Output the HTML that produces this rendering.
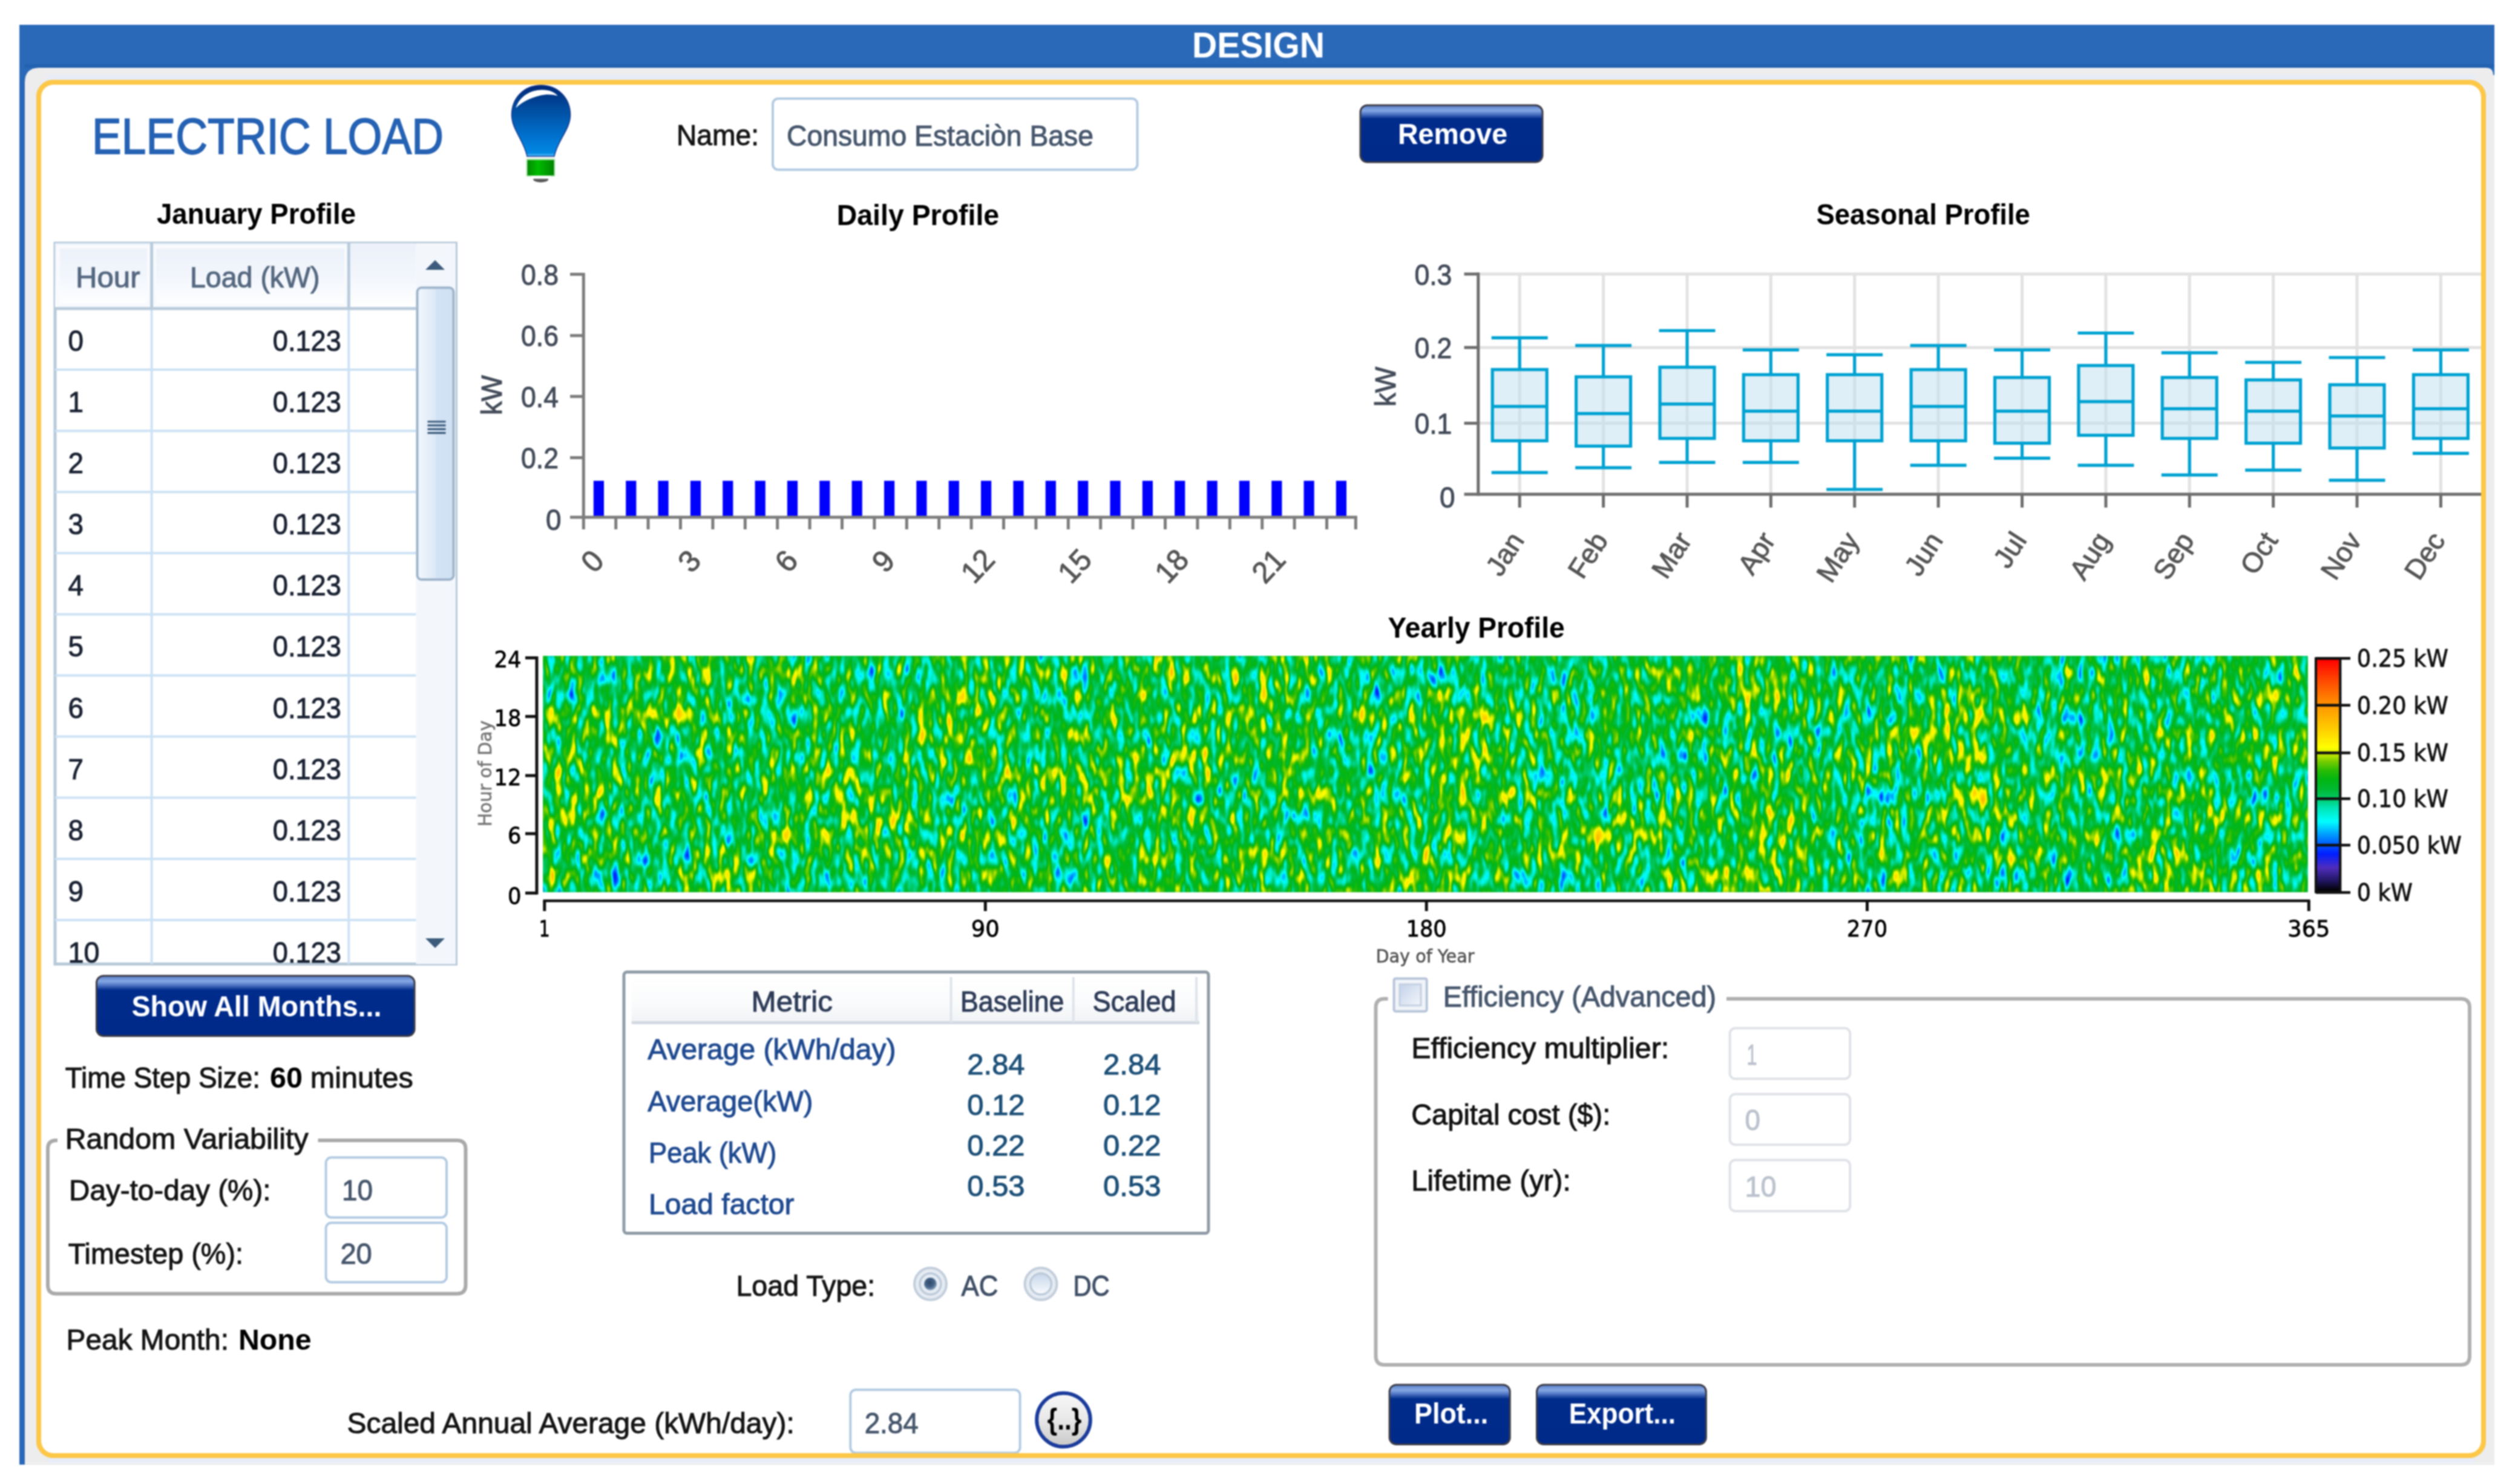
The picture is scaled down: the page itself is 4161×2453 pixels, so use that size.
<!DOCTYPE html>
<html lang="en"><head><meta charset="utf-8"><title>Electric Load - Design</title>
<style>html,body{margin:0;padding:0;background:#fff;overflow:hidden}svg{display:block}text{font-family:"Liberation Sans",sans-serif}</style></head>
<body>
<svg width="4161" height="2453" viewBox="0 0 4161 2453" style="filter:blur(1.3px)">
<defs>
<linearGradient id="btn" x1="0" y1="0" x2="0" y2="1">
<stop offset="0" stop-color="#5f86cf"/><stop offset="0.08" stop-color="#86a8e4"/><stop offset="0.15" stop-color="#4a70c0"/>
<stop offset="0.23" stop-color="#002c8c"/><stop offset="1" stop-color="#002a8a"/>
</linearGradient>
<linearGradient id="bulb" x1="0" y1="0" x2="0" y2="1">
<stop offset="0" stop-color="#002878"/><stop offset="0.3" stop-color="#004a9c"/><stop offset="0.7" stop-color="#0070cc"/><stop offset="0.95" stop-color="#0088e4"/><stop offset="1" stop-color="#58c0ff"/>
</linearGradient>
<linearGradient id="base" x1="0" y1="0" x2="1" y2="0">
<stop offset="0" stop-color="#008a00"/><stop offset="0.4" stop-color="#00bc00"/><stop offset="1" stop-color="#008400"/>
</linearGradient>

<linearGradient id="thdr" x1="0" y1="0" x2="0" y2="1">
<stop offset="0" stop-color="#ecf1fa"/><stop offset="0.5" stop-color="#f2f6fc"/><stop offset="1" stop-color="#ffffff"/>
</linearGradient>
<linearGradient id="thumb" x1="0" y1="0" x2="1" y2="0">
<stop offset="0" stop-color="#f2f7fd"/><stop offset="0.45" stop-color="#dfeaf7"/><stop offset="0.55" stop-color="#d2e3f5"/><stop offset="1" stop-color="#cfe1f4"/>
</linearGradient>
<clipPath id="tclip"><rect x="91" y="402" width="662" height="1191.5"/></clipPath>

<linearGradient id="rbtn" x1="0" y1="0" x2="0" y2="1">
<stop offset="0" stop-color="#f8f8f8"/><stop offset="0.5" stop-color="#e8e8e8"/><stop offset="1" stop-color="#c8c8c8"/>
</linearGradient>

<filter id="hm" x="0" y="0" width="1" height="1" color-interpolation-filters="sRGB">
<feTurbulence type="fractalNoise" baseFrequency="0.085 0.03" numOctaves="2" seed="7" result="t1"/>
<feColorMatrix in="t1" type="matrix" values="1 0 0 0 0  1 0 0 0 0  1 0 0 0 0  0 0 0 0 1" result="a"/>
<feTurbulence type="fractalNoise" baseFrequency="0.006 0.012" numOctaves="1" seed="4" result="t2"/>
<feColorMatrix in="t2" type="matrix" values="1 0 0 0 0  1 0 0 0 0  1 0 0 0 0  0 0 0 0 1" result="b"/>
<feComposite in="a" in2="b" operator="arithmetic" k1="0" k2="1" k3="0.3" k4="-0.15"/>
<feGaussianBlur stdDeviation="1.6 3.2"/>
<feComponentTransfer><feFuncR type="table" tableValues="0.222 0.284 0.261 0.162 0.063 0.000 0.000 0.000 0.000 0.000 0.000 0.000 0.000 0.000 0.000 0.000 0.000 0.000 0.000 0.000 0.000 0.000 0.039 0.114 0.220 0.369 0.529 0.716 0.877 1.000 1.000 1.000 1.000 1.000 1.000 1.000 1.000 1.000 1.000 1.000 1.000"/><feFuncG type="table" tableValues="0.131 0.162 0.167 0.148 0.129 0.159 0.271 0.382 0.494 0.609 0.739 0.870 1.000 0.966 0.933 0.899 0.850 0.798 0.764 0.736 0.722 0.716 0.720 0.731 0.751 0.782 0.826 0.896 0.955 0.993 0.946 0.900 0.853 0.806 0.765 0.724 0.683 0.642 0.601 0.553 0.500"/><feFuncB type="table" tableValues="0.562 0.686 0.788 0.868 0.949 1.000 1.000 1.000 1.000 1.000 1.000 1.000 1.000 0.907 0.814 0.721 0.580 0.431 0.324 0.230 0.161 0.105 0.064 0.036 0.016 0.006 0.000 0.000 0.000 0.000 0.000 0.000 0.000 0.000 0.000 0.000 0.000 0.000 0.000 0.000 0.000"/></feComponentTransfer>
</filter>
<linearGradient id="cbar" x1="0" y1="0" x2="0" y2="1"><stop offset="0.000" stop-color="rgb(255,0,0)"/><stop offset="0.100" stop-color="rgb(255,80,0)"/><stop offset="0.200" stop-color="rgb(255,150,0)"/><stop offset="0.300" stop-color="rgb(255,205,0)"/><stop offset="0.380" stop-color="rgb(255,255,0)"/><stop offset="0.408" stop-color="rgb(200,235,0)"/><stop offset="0.440" stop-color="rgb(120,205,0)"/><stop offset="0.480" stop-color="rgb(40,188,5)"/><stop offset="0.520" stop-color="rgb(0,182,20)"/><stop offset="0.560" stop-color="rgb(0,185,50)"/><stop offset="0.600" stop-color="rgb(0,200,100)"/><stop offset="0.640" stop-color="rgb(0,228,180)"/><stop offset="0.700" stop-color="rgb(0,255,255)"/><stop offset="0.760" stop-color="rgb(0,150,255)"/><stop offset="0.800" stop-color="rgb(0,90,255)"/><stop offset="0.840" stop-color="rgb(0,30,255)"/><stop offset="0.900" stop-color="rgb(80,45,190)"/><stop offset="0.960" stop-color="rgb(30,20,90)"/><stop offset="1.000" stop-color="rgb(0,0,0)"/></linearGradient>

<linearGradient id="mhdr" x1="0" y1="0" x2="0" y2="1">
<stop offset="0" stop-color="#ffffff"/><stop offset="0.6" stop-color="#fafbfc"/><stop offset="1" stop-color="#f1f3f6"/>
</linearGradient>
<radialGradient id="radio" cx="0.5" cy="0.5" r="0.5">
<stop offset="0" stop-color="#f4f7fb"/><stop offset="0.6" stop-color="#eef2f8"/><stop offset="1" stop-color="#dfe6ef"/>
</radialGradient>
<linearGradient id="radio2" x1="0" y1="0" x2="0" y2="1">
<stop offset="0" stop-color="#c5d6ea"/><stop offset="1" stop-color="#fbfcfe"/>
</linearGradient>
<radialGradient id="dot" cx="0.45" cy="0.4" r="0.6">
<stop offset="0" stop-color="#2d4868"/><stop offset="0.6" stop-color="#46648a"/><stop offset="1" stop-color="#8fa6c0"/>
</radialGradient>
<linearGradient id="chk" x1="0" y1="0" x2="1" y2="1">
<stop offset="0" stop-color="#c3d2ea"/><stop offset="1" stop-color="#f3f6fb"/>
</linearGradient>
</defs>
<rect x="32.0" y="41.0" width="4090.0" height="99.0" fill="#2a69b8"/>
<rect x="32.0" y="41.0" width="9.0" height="2380.0" fill="#2a69b8"/>
<rect x="41.0" y="106.0" width="4081.0" height="6.0" fill="#2262b0"/>
<path d="M41 2418 V136 Q41 112 65 112 H4108 Q4120 112 4120 124 V2418 Z" fill="#ededed"/>
<line x1="41.0" y1="2420.0" x2="4121.0" y2="2420.0" stroke="#e4e4e4" stroke-width="2" />
<line x1="4121.0" y1="124.0" x2="4121.0" y2="2421.0" stroke="#ececec" stroke-width="2" />
<rect x="59.0" y="131.0" width="4050.0" height="2280.0" fill="#e7ecf6" rx="28"/>
<rect x="78.0" y="123.0" width="4012.0" height="10.0" fill="#e7ecf6"/>
<rect x="78.0" y="2409.0" width="4012.0" height="9.0" fill="#e7ecf6"/>
<rect x="64.0" y="136.0" width="4040.0" height="2270.0" fill="#fff" stroke="#fdc748" stroke-width="8" rx="24"/>
<text x="2079.5" y="95.3" font-size="60" textLength="219.0" lengthAdjust="spacingAndGlyphs" font-weight="bold" fill="#fff" text-anchor="middle">DESIGN</text>
<text x="152.0" y="254.2" font-size="84" textLength="581.0" lengthAdjust="spacingAndGlyphs" fill="#2662b4" stroke="#2662b4" stroke-width="1.75">ELECTRIC LOAD</text>
<g>
<path d="M894 141 C866 141 845.5 162 845.5 190 C845.5 214 866 232 871 258.5 H916 C921 232 942.5 214 942.5 190 C942.5 162 922 141 894 141 Z" fill="url(#bulb)" stroke="#16368a" stroke-width="1.5"/>
<path d="M852.5 178.5 C858 160 876 148.5 896 148.5 C908 148.5 917 152.5 921.5 158.5 C912 155.5 902 155.5 892 158 C875 162 861 170 852.5 178.5 Z" fill="#fff"/>
<rect x="869.5" y="262.0" width="48.0" height="30.0" fill="#b4e6b4" rx="2"/>
<rect x="871.5" y="264.5" width="44.0" height="25.5" fill="url(#base)"/>
<ellipse cx="893.7" cy="296.5" rx="12.5" ry="5" fill="#5a5a5a"/>
<rect x="878.0" y="291.0" width="32.0" height="4.5" fill="#fff"/>
</g>
<text x="1118.0" y="240.0" font-size="48" textLength="136.0" lengthAdjust="spacingAndGlyphs" fill="#141414" stroke="#141414" stroke-width="1.00">Name:</text>
<rect x="1277.0" y="163.0" width="602.5" height="117.5" fill="#fff" stroke="#b3cbe3" stroke-width="4" rx="9"/>
<text x="1300.0" y="241.0" font-size="48" textLength="507.0" lengthAdjust="spacingAndGlyphs" fill="#46566c" stroke="#46566c" stroke-width="1.00">Consumo Estaciòn Base</text>
<rect x="2246.5" y="172.5" width="304.0" height="97.0" fill="#3c3c48" rx="13"/>
<rect x="2249.5" y="175.5" width="298.0" height="91.0" fill="url(#btn)" rx="10"/>
<text x="2310.0" y="237.6" font-size="48" textLength="181.0" lengthAdjust="spacingAndGlyphs" font-weight="bold" fill="#fff">Remove</text>
<text x="259.0" y="370.0" font-size="48" textLength="329.0" lengthAdjust="spacingAndGlyphs" font-weight="bold">January Profile</text>
<text x="1382.7" y="371.6" font-size="48" textLength="268.5" lengthAdjust="spacingAndGlyphs" font-weight="bold">Daily Profile</text>
<text x="3001.4" y="370.8" font-size="48" textLength="353.5" lengthAdjust="spacingAndGlyphs" font-weight="bold">Seasonal Profile</text>
<text x="2293.6" y="1054.0" font-size="48" textLength="292.0" lengthAdjust="spacingAndGlyphs" font-weight="bold">Yearly Profile</text>
<rect x="91.0" y="402.0" width="662.5" height="1191.5" fill="#fff" stroke="#b7c9d9" stroke-width="5"/>
<g clip-path="url(#tclip)">
<rect x="91.0" y="402.0" width="596.5" height="106.0" fill="url(#thdr)"/>
<rect x="96.0" y="408.0" width="150.0" height="96.0" fill="none" stroke="#f8fafd" stroke-width="6"/>
<rect x="255.0" y="408.0" width="317.0" height="96.0" fill="none" stroke="#f8fafd" stroke-width="6"/>
<rect x="687.5" y="402.0" width="66.0" height="1192.0" fill="#f3f7fc"/>
<line x1="250.6" y1="510.0" x2="250.6" y2="1596.0" stroke="#cde2f5" stroke-width="4" />
<line x1="250.6" y1="402.0" x2="250.6" y2="510.0" stroke="#b9cbdc" stroke-width="5" />
<line x1="576.3" y1="510.0" x2="576.3" y2="1596.0" stroke="#cde2f5" stroke-width="4" />
<line x1="576.3" y1="402.0" x2="576.3" y2="510.0" stroke="#b9cbdc" stroke-width="5" />
<line x1="91.0" y1="611.1" x2="687.5" y2="611.1" stroke="#cde2f5" stroke-width="4" />
<line x1="91.0" y1="712.2" x2="687.5" y2="712.2" stroke="#cde2f5" stroke-width="4" />
<line x1="91.0" y1="813.2" x2="687.5" y2="813.2" stroke="#cde2f5" stroke-width="4" />
<line x1="91.0" y1="914.3" x2="687.5" y2="914.3" stroke="#cde2f5" stroke-width="4" />
<line x1="91.0" y1="1015.4" x2="687.5" y2="1015.4" stroke="#cde2f5" stroke-width="4" />
<line x1="91.0" y1="1116.5" x2="687.5" y2="1116.5" stroke="#cde2f5" stroke-width="4" />
<line x1="91.0" y1="1217.6" x2="687.5" y2="1217.6" stroke="#cde2f5" stroke-width="4" />
<line x1="91.0" y1="1318.6" x2="687.5" y2="1318.6" stroke="#cde2f5" stroke-width="4" />
<line x1="91.0" y1="1419.7" x2="687.5" y2="1419.7" stroke="#cde2f5" stroke-width="4" />
<line x1="91.0" y1="1520.8" x2="687.5" y2="1520.8" stroke="#cde2f5" stroke-width="4" />
<line x1="91.0" y1="510.0" x2="687.5" y2="510.0" stroke="#b9cbdc" stroke-width="5" />
<text x="125.0" y="474.7" font-size="48" textLength="106.5" lengthAdjust="spacingAndGlyphs" fill="#556880" stroke="#556880" stroke-width="1.00">Hour</text>
<text x="314.0" y="474.7" font-size="48" textLength="214.5" lengthAdjust="spacingAndGlyphs" fill="#556880" stroke="#556880" stroke-width="1.00">Load (kW)</text>
<text x="112.4" y="580.0" font-size="48" textLength="25.5" lengthAdjust="spacingAndGlyphs" fill="#1a2232" stroke="#1a2232" stroke-width="1.00">0</text>
<text x="450.8" y="580.0" font-size="48" textLength="113.0" lengthAdjust="spacingAndGlyphs" fill="#1a2232" stroke="#1a2232" stroke-width="1.00">0.123</text>
<text x="112.4" y="681.1" font-size="48" textLength="25.5" lengthAdjust="spacingAndGlyphs" fill="#1a2232" stroke="#1a2232" stroke-width="1.00">1</text>
<text x="450.8" y="681.1" font-size="48" textLength="113.0" lengthAdjust="spacingAndGlyphs" fill="#1a2232" stroke="#1a2232" stroke-width="1.00">0.123</text>
<text x="112.4" y="782.2" font-size="48" textLength="25.5" lengthAdjust="spacingAndGlyphs" fill="#1a2232" stroke="#1a2232" stroke-width="1.00">2</text>
<text x="450.8" y="782.2" font-size="48" textLength="113.0" lengthAdjust="spacingAndGlyphs" fill="#1a2232" stroke="#1a2232" stroke-width="1.00">0.123</text>
<text x="112.4" y="883.2" font-size="48" textLength="25.5" lengthAdjust="spacingAndGlyphs" fill="#1a2232" stroke="#1a2232" stroke-width="1.00">3</text>
<text x="450.8" y="883.2" font-size="48" textLength="113.0" lengthAdjust="spacingAndGlyphs" fill="#1a2232" stroke="#1a2232" stroke-width="1.00">0.123</text>
<text x="112.4" y="984.3" font-size="48" textLength="25.5" lengthAdjust="spacingAndGlyphs" fill="#1a2232" stroke="#1a2232" stroke-width="1.00">4</text>
<text x="450.8" y="984.3" font-size="48" textLength="113.0" lengthAdjust="spacingAndGlyphs" fill="#1a2232" stroke="#1a2232" stroke-width="1.00">0.123</text>
<text x="112.4" y="1085.4" font-size="48" textLength="25.5" lengthAdjust="spacingAndGlyphs" fill="#1a2232" stroke="#1a2232" stroke-width="1.00">5</text>
<text x="450.8" y="1085.4" font-size="48" textLength="113.0" lengthAdjust="spacingAndGlyphs" fill="#1a2232" stroke="#1a2232" stroke-width="1.00">0.123</text>
<text x="112.4" y="1186.5" font-size="48" textLength="25.5" lengthAdjust="spacingAndGlyphs" fill="#1a2232" stroke="#1a2232" stroke-width="1.00">6</text>
<text x="450.8" y="1186.5" font-size="48" textLength="113.0" lengthAdjust="spacingAndGlyphs" fill="#1a2232" stroke="#1a2232" stroke-width="1.00">0.123</text>
<text x="112.4" y="1287.6" font-size="48" textLength="25.5" lengthAdjust="spacingAndGlyphs" fill="#1a2232" stroke="#1a2232" stroke-width="1.00">7</text>
<text x="450.8" y="1287.6" font-size="48" textLength="113.0" lengthAdjust="spacingAndGlyphs" fill="#1a2232" stroke="#1a2232" stroke-width="1.00">0.123</text>
<text x="112.4" y="1388.6" font-size="48" textLength="25.5" lengthAdjust="spacingAndGlyphs" fill="#1a2232" stroke="#1a2232" stroke-width="1.00">8</text>
<text x="450.8" y="1388.6" font-size="48" textLength="113.0" lengthAdjust="spacingAndGlyphs" fill="#1a2232" stroke="#1a2232" stroke-width="1.00">0.123</text>
<text x="112.4" y="1489.7" font-size="48" textLength="25.5" lengthAdjust="spacingAndGlyphs" fill="#1a2232" stroke="#1a2232" stroke-width="1.00">9</text>
<text x="450.8" y="1489.7" font-size="48" textLength="113.0" lengthAdjust="spacingAndGlyphs" fill="#1a2232" stroke="#1a2232" stroke-width="1.00">0.123</text>
<text x="112.4" y="1590.8" font-size="48" textLength="52.0" lengthAdjust="spacingAndGlyphs" fill="#1a2232" stroke="#1a2232" stroke-width="1.00">10</text>
<text x="450.8" y="1590.8" font-size="48" textLength="113.0" lengthAdjust="spacingAndGlyphs" fill="#1a2232" stroke="#1a2232" stroke-width="1.00">0.123</text>
<path d="M703 446 L719 430 L735 446 Z" fill="#3d5c7c"/>
<path d="M703 1551 L719 1567 L735 1551 Z" fill="#3d5c7c"/>
<rect x="689.5" y="475.5" width="60.0" height="482.5" fill="url(#thumb)" stroke="#9fb4cb" stroke-width="4" rx="7"/>
<line x1="706.5" y1="697.0" x2="736.5" y2="697.0" stroke="#3d5c7c" stroke-width="3.2" />
<line x1="706.5" y1="703.2" x2="736.5" y2="703.2" stroke="#3d5c7c" stroke-width="3.2" />
<line x1="706.5" y1="709.4" x2="736.5" y2="709.4" stroke="#3d5c7c" stroke-width="3.2" />
<line x1="706.5" y1="715.6" x2="736.5" y2="715.6" stroke="#3d5c7c" stroke-width="3.2" />
</g>
<rect x="158.0" y="1611.5" width="528.5" height="102.5" fill="#3c3c48" rx="13"/>
<rect x="161.0" y="1614.5" width="522.5" height="96.5" fill="url(#btn)" rx="10"/>
<text x="217.5" y="1680.2" font-size="48" textLength="413.0" lengthAdjust="spacingAndGlyphs" font-weight="bold" fill="#fff">Show All Months...</text>
<text x="107.7" y="1797.8" font-size="48" textLength="322.3" lengthAdjust="spacingAndGlyphs" fill="#141414" stroke="#141414" stroke-width="1.00">Time Step Size:</text>
<text x="446.0" y="1797.8" font-size="48" textLength="54.0" lengthAdjust="spacingAndGlyphs" font-weight="bold">60</text>
<text x="512.7" y="1797.8" font-size="48" textLength="170.0" lengthAdjust="spacingAndGlyphs" fill="#141414" stroke="#141414" stroke-width="1.00">minutes</text>
<path d="M95 1885 H93 Q79 1885 79 1899 V2124 Q79 2138.5 93 2138.5 H755 Q769.5 2138.5 769.5 2124 V1899 Q769.5 1885 755 1885 H525.5" fill="none" stroke="#aaaaaa" stroke-width="6"/>
<text x="107.7" y="1898.5" font-size="48" textLength="402.0" lengthAdjust="spacingAndGlyphs" fill="#141414" stroke="#141414" stroke-width="1.00">Random Variability</text>
<text x="114.0" y="1983.6" font-size="48" textLength="333.6" lengthAdjust="spacingAndGlyphs" fill="#141414" stroke="#141414" stroke-width="1.00">Day-to-day (%):</text>
<text x="112.8" y="2089.2" font-size="48" textLength="289.2" lengthAdjust="spacingAndGlyphs" fill="#141414" stroke="#141414" stroke-width="1.00">Timestep (%):</text>
<rect x="538.6" y="1913.2" width="199.4" height="99.3" fill="#fff" stroke="#b3cbe3" stroke-width="4" rx="9"/>
<rect x="538.6" y="2021.2" width="199.4" height="98.3" fill="#fff" stroke="#b3cbe3" stroke-width="4" rx="9"/>
<text x="565.0" y="1983.6" font-size="48" textLength="51.0" lengthAdjust="spacingAndGlyphs" fill="#46566c" stroke="#46566c" stroke-width="1.00">10</text>
<text x="562.4" y="2089.2" font-size="48" textLength="52.4" lengthAdjust="spacingAndGlyphs" fill="#46566c" stroke="#46566c" stroke-width="1.00">20</text>
<text x="109.6" y="2230.6" font-size="48" textLength="268.4" lengthAdjust="spacingAndGlyphs" fill="#141414" stroke="#141414" stroke-width="1.00">Peak Month:</text>
<text x="394.0" y="2230.6" font-size="48" textLength="120.7" lengthAdjust="spacingAndGlyphs" font-weight="bold">None</text>
<text x="573.5" y="2369.0" font-size="48" textLength="739.2" lengthAdjust="spacingAndGlyphs" fill="#141414" stroke="#141414" stroke-width="1.00">Scaled Annual Average (kWh/day):</text>
<rect x="1405.3" y="2297.3" width="280.3" height="104.2" fill="#fff" stroke="#b3cbe3" stroke-width="4" rx="9"/>
<text x="1428.7" y="2368.7" font-size="48" textLength="89.0" lengthAdjust="spacingAndGlyphs" fill="#46566c" stroke="#46566c" stroke-width="1.00">2.84</text>
<circle cx="1757.5" cy="2347" r="44.3" fill="url(#rbtn)" stroke="#1b3c9c" stroke-width="6"/>
<text x="1759.0" y="2363.0" font-size="50" textLength="57.0" lengthAdjust="spacingAndGlyphs" font-weight="bold" text-anchor="middle">{..}</text>
<rect x="980.8" y="794.7" width="17.2" height="60.3" fill="#0000ff"/>
<rect x="1034.2" y="794.7" width="17.2" height="60.3" fill="#0000ff"/>
<rect x="1087.5" y="794.7" width="17.2" height="60.3" fill="#0000ff"/>
<rect x="1140.9" y="794.7" width="17.2" height="60.3" fill="#0000ff"/>
<rect x="1194.2" y="794.7" width="17.2" height="60.3" fill="#0000ff"/>
<rect x="1247.6" y="794.7" width="17.2" height="60.3" fill="#0000ff"/>
<rect x="1300.9" y="794.7" width="17.2" height="60.3" fill="#0000ff"/>
<rect x="1354.2" y="794.7" width="17.2" height="60.3" fill="#0000ff"/>
<rect x="1407.6" y="794.7" width="17.2" height="60.3" fill="#0000ff"/>
<rect x="1461.0" y="794.7" width="17.2" height="60.3" fill="#0000ff"/>
<rect x="1514.3" y="794.7" width="17.2" height="60.3" fill="#0000ff"/>
<rect x="1567.7" y="794.7" width="17.2" height="60.3" fill="#0000ff"/>
<rect x="1621.0" y="794.7" width="17.2" height="60.3" fill="#0000ff"/>
<rect x="1674.4" y="794.7" width="17.2" height="60.3" fill="#0000ff"/>
<rect x="1727.7" y="794.7" width="17.2" height="60.3" fill="#0000ff"/>
<rect x="1781.1" y="794.7" width="17.2" height="60.3" fill="#0000ff"/>
<rect x="1834.4" y="794.7" width="17.2" height="60.3" fill="#0000ff"/>
<rect x="1887.8" y="794.7" width="17.2" height="60.3" fill="#0000ff"/>
<rect x="1941.1" y="794.7" width="17.2" height="60.3" fill="#0000ff"/>
<rect x="1994.5" y="794.7" width="17.2" height="60.3" fill="#0000ff"/>
<rect x="2047.8" y="794.7" width="17.2" height="60.3" fill="#0000ff"/>
<rect x="2101.2" y="794.7" width="17.2" height="60.3" fill="#0000ff"/>
<rect x="2154.5" y="794.7" width="17.2" height="60.3" fill="#0000ff"/>
<rect x="2207.8" y="794.7" width="17.2" height="60.3" fill="#0000ff"/>
<line x1="964.3" y1="451.0" x2="964.3" y2="875.0" stroke="#7d7d7d" stroke-width="5" />
<line x1="942.0" y1="855.0" x2="2242.8" y2="855.0" stroke="#7d7d7d" stroke-width="5" />
<line x1="942.0" y1="453.4" x2="964.3" y2="453.4" stroke="#7d7d7d" stroke-width="5" />
<line x1="942.0" y1="554.7" x2="964.3" y2="554.7" stroke="#7d7d7d" stroke-width="5" />
<line x1="942.0" y1="655.3" x2="964.3" y2="655.3" stroke="#7d7d7d" stroke-width="5" />
<line x1="942.0" y1="756.5" x2="964.3" y2="756.5" stroke="#7d7d7d" stroke-width="5" />
<line x1="1017.7" y1="855.0" x2="1017.7" y2="875.0" stroke="#7d7d7d" stroke-width="5" />
<line x1="1071.1" y1="855.0" x2="1071.1" y2="875.0" stroke="#7d7d7d" stroke-width="5" />
<line x1="1124.5" y1="855.0" x2="1124.5" y2="875.0" stroke="#7d7d7d" stroke-width="5" />
<line x1="1177.9" y1="855.0" x2="1177.9" y2="875.0" stroke="#7d7d7d" stroke-width="5" />
<line x1="1231.3" y1="855.0" x2="1231.3" y2="875.0" stroke="#7d7d7d" stroke-width="5" />
<line x1="1284.7" y1="855.0" x2="1284.7" y2="875.0" stroke="#7d7d7d" stroke-width="5" />
<line x1="1338.1" y1="855.0" x2="1338.1" y2="875.0" stroke="#7d7d7d" stroke-width="5" />
<line x1="1391.5" y1="855.0" x2="1391.5" y2="875.0" stroke="#7d7d7d" stroke-width="5" />
<line x1="1444.9" y1="855.0" x2="1444.9" y2="875.0" stroke="#7d7d7d" stroke-width="5" />
<line x1="1498.3" y1="855.0" x2="1498.3" y2="875.0" stroke="#7d7d7d" stroke-width="5" />
<line x1="1551.7" y1="855.0" x2="1551.7" y2="875.0" stroke="#7d7d7d" stroke-width="5" />
<line x1="1605.1" y1="855.0" x2="1605.1" y2="875.0" stroke="#7d7d7d" stroke-width="5" />
<line x1="1658.5" y1="855.0" x2="1658.5" y2="875.0" stroke="#7d7d7d" stroke-width="5" />
<line x1="1711.9" y1="855.0" x2="1711.9" y2="875.0" stroke="#7d7d7d" stroke-width="5" />
<line x1="1765.3" y1="855.0" x2="1765.3" y2="875.0" stroke="#7d7d7d" stroke-width="5" />
<line x1="1818.7" y1="855.0" x2="1818.7" y2="875.0" stroke="#7d7d7d" stroke-width="5" />
<line x1="1872.1" y1="855.0" x2="1872.1" y2="875.0" stroke="#7d7d7d" stroke-width="5" />
<line x1="1925.5" y1="855.0" x2="1925.5" y2="875.0" stroke="#7d7d7d" stroke-width="5" />
<line x1="1978.9" y1="855.0" x2="1978.9" y2="875.0" stroke="#7d7d7d" stroke-width="5" />
<line x1="2032.3" y1="855.0" x2="2032.3" y2="875.0" stroke="#7d7d7d" stroke-width="5" />
<line x1="2085.7" y1="855.0" x2="2085.7" y2="875.0" stroke="#7d7d7d" stroke-width="5" />
<line x1="2139.1" y1="855.0" x2="2139.1" y2="875.0" stroke="#7d7d7d" stroke-width="5" />
<line x1="2192.5" y1="855.0" x2="2192.5" y2="875.0" stroke="#7d7d7d" stroke-width="5" />
<line x1="2240.3" y1="855.0" x2="2240.3" y2="875.0" stroke="#7d7d7d" stroke-width="5" />
<text x="861.0" y="470.9" font-size="48" textLength="62.0" lengthAdjust="spacingAndGlyphs" fill="#444c5a" stroke="#444c5a" stroke-width="1.00">0.8</text>
<text x="861.0" y="572.2" font-size="48" textLength="62.0" lengthAdjust="spacingAndGlyphs" fill="#444c5a" stroke="#444c5a" stroke-width="1.00">0.6</text>
<text x="861.0" y="672.8" font-size="48" textLength="62.0" lengthAdjust="spacingAndGlyphs" fill="#444c5a" stroke="#444c5a" stroke-width="1.00">0.4</text>
<text x="861.0" y="774.0" font-size="48" textLength="62.0" lengthAdjust="spacingAndGlyphs" fill="#444c5a" stroke="#444c5a" stroke-width="1.00">0.2</text>
<text x="902.0" y="875.5" font-size="48" textLength="25.5" lengthAdjust="spacingAndGlyphs" fill="#444c5a" stroke="#444c5a" stroke-width="1.00">0</text>
<g transform="translate(829,686) rotate(-90)">
<text x="0.0" y="0.0" font-size="48" textLength="66.0" lengthAdjust="spacingAndGlyphs" fill="#444c5a" stroke="#444c5a" stroke-width="1.00">kW</text>
</g>
<g transform="translate(978.3,927.0) rotate(-47)">
<text x="0.0" y="18.0" font-size="50" textLength="27.5" lengthAdjust="spacingAndGlyphs" fill="#555" stroke="#555" stroke-width="1.04" text-anchor="middle">0</text>
</g>
<g transform="translate(1138.5,927.0) rotate(-47)">
<text x="0.0" y="18.0" font-size="50" textLength="27.5" lengthAdjust="spacingAndGlyphs" fill="#555" stroke="#555" stroke-width="1.04" text-anchor="middle">3</text>
</g>
<g transform="translate(1298.7,927.0) rotate(-47)">
<text x="0.0" y="18.0" font-size="50" textLength="27.5" lengthAdjust="spacingAndGlyphs" fill="#555" stroke="#555" stroke-width="1.04" text-anchor="middle">6</text>
</g>
<g transform="translate(1458.9,927.0) rotate(-47)">
<text x="0.0" y="18.0" font-size="50" textLength="27.5" lengthAdjust="spacingAndGlyphs" fill="#555" stroke="#555" stroke-width="1.04" text-anchor="middle">9</text>
</g>
<g transform="translate(1615.1,935.0) rotate(-47)">
<text x="0.0" y="18.0" font-size="50" textLength="54.0" lengthAdjust="spacingAndGlyphs" fill="#555" stroke="#555" stroke-width="1.04" text-anchor="middle">12</text>
</g>
<g transform="translate(1775.3,935.0) rotate(-47)">
<text x="0.0" y="18.0" font-size="50" textLength="54.0" lengthAdjust="spacingAndGlyphs" fill="#555" stroke="#555" stroke-width="1.04" text-anchor="middle">15</text>
</g>
<g transform="translate(1935.5,935.0) rotate(-47)">
<text x="0.0" y="18.0" font-size="50" textLength="54.0" lengthAdjust="spacingAndGlyphs" fill="#555" stroke="#555" stroke-width="1.04" text-anchor="middle">18</text>
</g>
<g transform="translate(2095.7,935.0) rotate(-47)">
<text x="0.0" y="18.0" font-size="50" textLength="54.0" lengthAdjust="spacingAndGlyphs" fill="#555" stroke="#555" stroke-width="1.04" text-anchor="middle">21</text>
</g>
<line x1="2442.8" y1="453.0" x2="4100.0" y2="453.0" stroke="#e2e2e2" stroke-width="5" />
<line x1="2442.8" y1="574.4" x2="4100.0" y2="574.4" stroke="#e2e2e2" stroke-width="5" />
<line x1="2442.8" y1="699.6" x2="4100.0" y2="699.6" stroke="#e2e2e2" stroke-width="5" />
<line x1="2511.2" y1="453.0" x2="2511.2" y2="817.0" stroke="#e2e2e2" stroke-width="5" />
<line x1="2649.6" y1="453.0" x2="2649.6" y2="817.0" stroke="#e2e2e2" stroke-width="5" />
<line x1="2788.0" y1="453.0" x2="2788.0" y2="817.0" stroke="#e2e2e2" stroke-width="5" />
<line x1="2926.3" y1="453.0" x2="2926.3" y2="817.0" stroke="#e2e2e2" stroke-width="5" />
<line x1="3064.7" y1="453.0" x2="3064.7" y2="817.0" stroke="#e2e2e2" stroke-width="5" />
<line x1="3203.1" y1="453.0" x2="3203.1" y2="817.0" stroke="#e2e2e2" stroke-width="5" />
<line x1="3341.5" y1="453.0" x2="3341.5" y2="817.0" stroke="#e2e2e2" stroke-width="5" />
<line x1="3479.9" y1="453.0" x2="3479.9" y2="817.0" stroke="#e2e2e2" stroke-width="5" />
<line x1="3618.2" y1="453.0" x2="3618.2" y2="817.0" stroke="#e2e2e2" stroke-width="5" />
<line x1="3756.6" y1="453.0" x2="3756.6" y2="817.0" stroke="#e2e2e2" stroke-width="5" />
<line x1="3895.0" y1="453.0" x2="3895.0" y2="817.0" stroke="#e2e2e2" stroke-width="5" />
<line x1="4033.4" y1="453.0" x2="4033.4" y2="817.0" stroke="#e2e2e2" stroke-width="5" />
<g stroke="#00a2d2" stroke-width="5.2" fill="none">
<rect x="2466.2" y="610.9" width="90.0" height="117.7" fill="#bfe0f2" fill-opacity="0.5"/>
<path d="M2464.7 558.4 H2557.7 M2511.2 558.4 V610.9 M2466.2 671.8 H2556.2 M2511.2 728.6 V781.1 M2464.7 781.1 H2557.7"/>
</g>
<g stroke="#00a2d2" stroke-width="5.2" fill="none">
<rect x="2604.6" y="622.9" width="90.0" height="114.5" fill="#bfe0f2" fill-opacity="0.5"/>
<path d="M2603.1 571.2 H2696.1 M2649.6 571.2 V622.9 M2604.6 683.7 H2694.6 M2649.6 737.4 V773.2 M2603.1 773.2 H2696.1"/>
</g>
<g stroke="#00a2d2" stroke-width="5.2" fill="none">
<rect x="2743.0" y="607.0" width="90.0" height="117.7" fill="#bfe0f2" fill-opacity="0.5"/>
<path d="M2741.5 546.5 H2834.5 M2788.0 546.5 V607.0 M2743.0 667.8 H2833.0 M2788.0 724.7 V764.4 M2741.5 764.4 H2834.5"/>
</g>
<g stroke="#00a2d2" stroke-width="5.2" fill="none">
<rect x="2881.3" y="619.3" width="90.0" height="109.3" fill="#bfe0f2" fill-opacity="0.5"/>
<path d="M2879.8 578.3 H2972.8 M2926.3 578.3 V619.3 M2881.3 679.7 H2971.3 M2926.3 728.6 V764.4 M2879.8 764.4 H2972.8"/>
</g>
<g stroke="#00a2d2" stroke-width="5.2" fill="none">
<rect x="3019.7" y="619.3" width="90.0" height="109.3" fill="#bfe0f2" fill-opacity="0.5"/>
<path d="M3018.2 586.3 H3111.2 M3064.7 586.3 V619.3 M3019.7 679.7 H3109.7 M3064.7 728.6 V809.0 M3018.2 809.0 H3111.2"/>
</g>
<g stroke="#00a2d2" stroke-width="5.2" fill="none">
<rect x="3158.1" y="611.0" width="90.0" height="117.6" fill="#bfe0f2" fill-opacity="0.5"/>
<path d="M3156.6 571.2 H3249.6 M3203.1 571.2 V611.0 M3158.1 671.8 H3248.1 M3203.1 728.6 V769.2 M3156.6 769.2 H3249.6"/>
</g>
<g stroke="#00a2d2" stroke-width="5.2" fill="none">
<rect x="3296.5" y="624.0" width="90.0" height="108.6" fill="#bfe0f2" fill-opacity="0.5"/>
<path d="M3295.0 578.3 H3388.0 M3341.5 578.3 V624.0 M3296.5 679.7 H3386.5 M3341.5 732.6 V757.3 M3295.0 757.3 H3388.0"/>
</g>
<g stroke="#00a2d2" stroke-width="5.2" fill="none">
<rect x="3434.9" y="604.2" width="90.0" height="115.3" fill="#bfe0f2" fill-opacity="0.5"/>
<path d="M3433.4 550.5 H3526.4 M3479.9 550.5 V604.2 M3434.9 663.8 H3524.9 M3479.9 719.5 V769.2 M3433.4 769.2 H3526.4"/>
</g>
<g stroke="#00a2d2" stroke-width="5.2" fill="none">
<rect x="3573.2" y="624.0" width="90.0" height="100.7" fill="#bfe0f2" fill-opacity="0.5"/>
<path d="M3571.7 583.1 H3664.7 M3618.2 583.1 V624.0 M3573.2 675.7 H3663.2 M3618.2 724.7 V785.1 M3571.7 785.1 H3664.7"/>
</g>
<g stroke="#00a2d2" stroke-width="5.2" fill="none">
<rect x="3711.6" y="628.0" width="90.0" height="104.6" fill="#bfe0f2" fill-opacity="0.5"/>
<path d="M3710.1 599.0 H3803.1 M3756.6 599.0 V628.0 M3711.6 679.7 H3801.6 M3756.6 732.6 V777.1 M3710.1 777.1 H3803.1"/>
</g>
<g stroke="#00a2d2" stroke-width="5.2" fill="none">
<rect x="3850.0" y="636.0" width="90.0" height="104.6" fill="#bfe0f2" fill-opacity="0.5"/>
<path d="M3848.5 591.0 H3941.5 M3895.0 591.0 V636.0 M3850.0 687.7 H3940.0 M3895.0 740.6 V793.8 M3848.5 793.8 H3941.5"/>
</g>
<g stroke="#00a2d2" stroke-width="5.2" fill="none">
<rect x="3988.4" y="619.3" width="90.0" height="105.4" fill="#bfe0f2" fill-opacity="0.5"/>
<path d="M3986.9 578.3 H4079.9 M4033.4 578.3 V619.3 M3988.4 675.7 H4078.4 M4033.4 724.7 V749.3 M3986.9 749.3 H4079.9"/>
</g>
<line x1="2442.8" y1="450.5" x2="2442.8" y2="819.5" stroke="#6e6e6e" stroke-width="5" />
<line x1="2419.5" y1="817.0" x2="4100.0" y2="817.0" stroke="#6e6e6e" stroke-width="5" />
<line x1="2419.5" y1="453.0" x2="2442.8" y2="453.0" stroke="#6e6e6e" stroke-width="5" />
<line x1="2419.5" y1="574.4" x2="2442.8" y2="574.4" stroke="#6e6e6e" stroke-width="5" />
<line x1="2419.5" y1="699.6" x2="2442.8" y2="699.6" stroke="#6e6e6e" stroke-width="5" />
<line x1="2511.2" y1="817.0" x2="2511.2" y2="839.0" stroke="#6e6e6e" stroke-width="5" />
<line x1="2649.6" y1="817.0" x2="2649.6" y2="839.0" stroke="#6e6e6e" stroke-width="5" />
<line x1="2788.0" y1="817.0" x2="2788.0" y2="839.0" stroke="#6e6e6e" stroke-width="5" />
<line x1="2926.3" y1="817.0" x2="2926.3" y2="839.0" stroke="#6e6e6e" stroke-width="5" />
<line x1="3064.7" y1="817.0" x2="3064.7" y2="839.0" stroke="#6e6e6e" stroke-width="5" />
<line x1="3203.1" y1="817.0" x2="3203.1" y2="839.0" stroke="#6e6e6e" stroke-width="5" />
<line x1="3341.5" y1="817.0" x2="3341.5" y2="839.0" stroke="#6e6e6e" stroke-width="5" />
<line x1="3479.9" y1="817.0" x2="3479.9" y2="839.0" stroke="#6e6e6e" stroke-width="5" />
<line x1="3618.2" y1="817.0" x2="3618.2" y2="839.0" stroke="#6e6e6e" stroke-width="5" />
<line x1="3756.6" y1="817.0" x2="3756.6" y2="839.0" stroke="#6e6e6e" stroke-width="5" />
<line x1="3895.0" y1="817.0" x2="3895.0" y2="839.0" stroke="#6e6e6e" stroke-width="5" />
<line x1="4033.4" y1="817.0" x2="4033.4" y2="839.0" stroke="#6e6e6e" stroke-width="5" />
<text x="2337.4" y="470.5" font-size="48" textLength="62.0" lengthAdjust="spacingAndGlyphs" fill="#444c5a" stroke="#444c5a" stroke-width="1.00">0.3</text>
<text x="2337.4" y="591.9" font-size="48" textLength="62.0" lengthAdjust="spacingAndGlyphs" fill="#444c5a" stroke="#444c5a" stroke-width="1.00">0.2</text>
<text x="2337.4" y="717.1" font-size="48" textLength="62.0" lengthAdjust="spacingAndGlyphs" fill="#444c5a" stroke="#444c5a" stroke-width="1.00">0.1</text>
<text x="2379.0" y="839.0" font-size="48" textLength="25.5" lengthAdjust="spacingAndGlyphs" fill="#444c5a" stroke="#444c5a" stroke-width="1.00">0</text>
<g transform="translate(2306,672) rotate(-90)">
<text x="0.0" y="0.0" font-size="48" textLength="66.0" lengthAdjust="spacingAndGlyphs" fill="#444c5a" stroke="#444c5a" stroke-width="1.00">kW</text>
</g>
<g transform="translate(2520.2,893.0) rotate(-57)">
<text x="0.0" y="0.0" font-size="46" fill="#555" stroke="#555" stroke-width="0.96" text-anchor="end">Jan</text>
</g>
<g transform="translate(2658.6,893.0) rotate(-57)">
<text x="0.0" y="0.0" font-size="46" fill="#555" stroke="#555" stroke-width="0.96" text-anchor="end">Feb</text>
</g>
<g transform="translate(2797.0,893.0) rotate(-57)">
<text x="0.0" y="0.0" font-size="46" fill="#555" stroke="#555" stroke-width="0.96" text-anchor="end">Mar</text>
</g>
<g transform="translate(2935.3,893.0) rotate(-57)">
<text x="0.0" y="0.0" font-size="46" fill="#555" stroke="#555" stroke-width="0.96" text-anchor="end">Apr</text>
</g>
<g transform="translate(3073.7,893.0) rotate(-57)">
<text x="0.0" y="0.0" font-size="46" fill="#555" stroke="#555" stroke-width="0.96" text-anchor="end">May</text>
</g>
<g transform="translate(3212.1,893.0) rotate(-57)">
<text x="0.0" y="0.0" font-size="46" fill="#555" stroke="#555" stroke-width="0.96" text-anchor="end">Jun</text>
</g>
<g transform="translate(3350.5,893.0) rotate(-57)">
<text x="0.0" y="0.0" font-size="46" fill="#555" stroke="#555" stroke-width="0.96" text-anchor="end">Jul</text>
</g>
<g transform="translate(3488.9,893.0) rotate(-57)">
<text x="0.0" y="0.0" font-size="46" fill="#555" stroke="#555" stroke-width="0.96" text-anchor="end">Aug</text>
</g>
<g transform="translate(3627.2,893.0) rotate(-57)">
<text x="0.0" y="0.0" font-size="46" fill="#555" stroke="#555" stroke-width="0.96" text-anchor="end">Sep</text>
</g>
<g transform="translate(3765.6,893.0) rotate(-57)">
<text x="0.0" y="0.0" font-size="46" fill="#555" stroke="#555" stroke-width="0.96" text-anchor="end">Oct</text>
</g>
<g transform="translate(3904.0,893.0) rotate(-57)">
<text x="0.0" y="0.0" font-size="46" fill="#555" stroke="#555" stroke-width="0.96" text-anchor="end">Nov</text>
</g>
<g transform="translate(4042.4,893.0) rotate(-57)">
<text x="0.0" y="0.0" font-size="46" fill="#555" stroke="#555" stroke-width="0.96" text-anchor="end">Dec</text>
</g>
<rect x="897.3" y="1084.2" width="2916.4" height="390.5" fill="#10b830"/>
<rect x="897.3" y="1084.2" width="2916.4" height="390.5" filter="url(#hm)"/>
<line x1="887.0" y1="1085.0" x2="887.0" y2="1478.5" stroke="#111" stroke-width="5" />
<line x1="868.0" y1="1087.4" x2="887.0" y2="1087.4" stroke="#111" stroke-width="5" />
<text x="861.5" y="1102.9" font-size="38" textLength="45.0" lengthAdjust="spacingAndGlyphs" text-anchor="end" style="font-family:'DejaVu Sans', 'Liberation Sans', sans-serif" stroke="#000" stroke-width="0.8">24</text>
<line x1="868.0" y1="1184.3" x2="887.0" y2="1184.3" stroke="#111" stroke-width="5" />
<text x="861.5" y="1199.8" font-size="38" textLength="45.0" lengthAdjust="spacingAndGlyphs" text-anchor="end" style="font-family:'DejaVu Sans', 'Liberation Sans', sans-serif" stroke="#000" stroke-width="0.8">18</text>
<line x1="868.0" y1="1282.0" x2="887.0" y2="1282.0" stroke="#111" stroke-width="5" />
<text x="861.5" y="1297.5" font-size="38" textLength="45.0" lengthAdjust="spacingAndGlyphs" text-anchor="end" style="font-family:'DejaVu Sans', 'Liberation Sans', sans-serif" stroke="#000" stroke-width="0.8">12</text>
<line x1="868.0" y1="1378.0" x2="887.0" y2="1378.0" stroke="#111" stroke-width="5" />
<text x="861.5" y="1393.5" font-size="38" textLength="22.5" lengthAdjust="spacingAndGlyphs" text-anchor="end" style="font-family:'DejaVu Sans', 'Liberation Sans', sans-serif" stroke="#000" stroke-width="0.8">6</text>
<line x1="868.0" y1="1476.2" x2="887.0" y2="1476.2" stroke="#111" stroke-width="5" />
<text x="861.5" y="1494.2" font-size="38" textLength="22.5" lengthAdjust="spacingAndGlyphs" text-anchor="end" style="font-family:'DejaVu Sans', 'Liberation Sans', sans-serif" stroke="#000" stroke-width="0.8">0</text>
<g transform="translate(812,1366) rotate(-90)">
<text x="0.0" y="0.0" font-size="31" textLength="175.0" lengthAdjust="spacingAndGlyphs" fill="#777" stroke="#777" stroke-width="0.65" style="font-family:'DejaVu Sans', 'Liberation Sans', sans-serif">Hour of Day</text>
</g>
<line x1="897.5" y1="1489.0" x2="3817.5" y2="1489.0" stroke="#111" stroke-width="4.5" />
<line x1="899.8" y1="1489.0" x2="899.8" y2="1506.0" stroke="#111" stroke-width="5" />
<text x="899.8" y="1547.5" font-size="38" textLength="18.0" lengthAdjust="spacingAndGlyphs" text-anchor="middle" style="font-family:'DejaVu Sans', 'Liberation Sans', sans-serif" stroke="#000" stroke-width="0.8">1</text>
<line x1="1628.3" y1="1489.0" x2="1628.3" y2="1506.0" stroke="#111" stroke-width="5" />
<text x="1628.3" y="1547.5" font-size="38" textLength="47.0" lengthAdjust="spacingAndGlyphs" text-anchor="middle" style="font-family:'DejaVu Sans', 'Liberation Sans', sans-serif" stroke="#000" stroke-width="0.8">90</text>
<line x1="2357.2" y1="1489.0" x2="2357.2" y2="1506.0" stroke="#111" stroke-width="5" />
<text x="2357.2" y="1547.5" font-size="38" textLength="67.0" lengthAdjust="spacingAndGlyphs" text-anchor="middle" style="font-family:'DejaVu Sans', 'Liberation Sans', sans-serif" stroke="#000" stroke-width="0.8">180</text>
<line x1="3085.5" y1="1489.0" x2="3085.5" y2="1506.0" stroke="#111" stroke-width="5" />
<text x="3085.5" y="1547.5" font-size="38" textLength="67.0" lengthAdjust="spacingAndGlyphs" text-anchor="middle" style="font-family:'DejaVu Sans', 'Liberation Sans', sans-serif" stroke="#000" stroke-width="0.8">270</text>
<line x1="3815.3" y1="1489.0" x2="3815.3" y2="1506.0" stroke="#111" stroke-width="5" />
<text x="3815.3" y="1547.5" font-size="38" textLength="70.0" lengthAdjust="spacingAndGlyphs" text-anchor="middle" style="font-family:'DejaVu Sans', 'Liberation Sans', sans-serif" stroke="#000" stroke-width="0.8">365</text>
<text x="2355.0" y="1590.7" font-size="31" textLength="163.0" lengthAdjust="spacingAndGlyphs" fill="#555" stroke="#555" stroke-width="0.65" text-anchor="middle" style="font-family:'DejaVu Sans', 'Liberation Sans', sans-serif">Day of Year</text>
<rect x="3824.9" y="1086.4" width="44.4" height="390.0" fill="#111"/>
<rect x="3829.0" y="1090.4" width="36.2" height="382.0" fill="url(#cbar)"/>
<line x1="3827.0" y1="1088.3" x2="3884.0" y2="1088.3" stroke="#111" stroke-width="4.5" />
<text x="3894.8" y="1102.1" font-size="38.5" textLength="151.0" lengthAdjust="spacingAndGlyphs" fill="#111" stroke="#111" stroke-width="0.80" style="font-family:'DejaVu Sans', 'Liberation Sans', sans-serif">0.25 kW</text>
<line x1="3827.0" y1="1165.8" x2="3884.0" y2="1165.8" stroke="#111" stroke-width="4.5" />
<text x="3894.8" y="1179.6" font-size="38.5" textLength="151.0" lengthAdjust="spacingAndGlyphs" fill="#111" stroke="#111" stroke-width="0.80" style="font-family:'DejaVu Sans', 'Liberation Sans', sans-serif">0.20 kW</text>
<line x1="3827.0" y1="1244.6" x2="3884.0" y2="1244.6" stroke="#111" stroke-width="4.5" />
<text x="3894.8" y="1258.4" font-size="38.5" textLength="151.0" lengthAdjust="spacingAndGlyphs" fill="#111" stroke="#111" stroke-width="0.80" style="font-family:'DejaVu Sans', 'Liberation Sans', sans-serif">0.15 kW</text>
<line x1="3827.0" y1="1320.3" x2="3884.0" y2="1320.3" stroke="#111" stroke-width="4.5" />
<text x="3894.8" y="1334.1" font-size="38.5" textLength="151.0" lengthAdjust="spacingAndGlyphs" fill="#111" stroke="#111" stroke-width="0.80" style="font-family:'DejaVu Sans', 'Liberation Sans', sans-serif">0.10 kW</text>
<line x1="3827.0" y1="1397.0" x2="3884.0" y2="1397.0" stroke="#111" stroke-width="4.5" />
<text x="3894.8" y="1410.8" font-size="38.5" textLength="173.0" lengthAdjust="spacingAndGlyphs" fill="#111" stroke="#111" stroke-width="0.80" style="font-family:'DejaVu Sans', 'Liberation Sans', sans-serif">0.050 kW</text>
<line x1="3827.0" y1="1475.2" x2="3884.0" y2="1475.2" stroke="#111" stroke-width="4.5" />
<text x="3894.8" y="1489.0" font-size="38.5" textLength="92.0" lengthAdjust="spacingAndGlyphs" fill="#111" stroke="#111" stroke-width="0.80" style="font-family:'DejaVu Sans', 'Liberation Sans', sans-serif">0 kW</text>
<rect x="1031.0" y="1606.7" width="966.0" height="431.7" fill="#fff" stroke="#8f9ba6" stroke-width="5" rx="5"/>
<rect x="1043.5" y="1615.0" width="938.5" height="73.0" fill="url(#mhdr)"/>
<line x1="1043.5" y1="1690.5" x2="1982.0" y2="1690.5" stroke="#d3dae2" stroke-width="5" />
<line x1="1571.6" y1="1615.0" x2="1571.6" y2="1690.0" stroke="#dfe4ea" stroke-width="4" />
<line x1="1773.8" y1="1615.0" x2="1773.8" y2="1690.0" stroke="#dfe4ea" stroke-width="4" />
<line x1="1977.0" y1="1615.0" x2="1977.0" y2="1690.0" stroke="#dfe4ea" stroke-width="4" />
<text x="1241.5" y="1672.0" font-size="48" textLength="134.5" lengthAdjust="spacingAndGlyphs" fill="#2e3c58" stroke="#2e3c58" stroke-width="1.00">Metric</text>
<text x="1587.0" y="1672.0" font-size="48" textLength="171.4" lengthAdjust="spacingAndGlyphs" fill="#2e3c58" stroke="#2e3c58" stroke-width="1.00">Baseline</text>
<text x="1805.6" y="1672.0" font-size="48" textLength="138.0" lengthAdjust="spacingAndGlyphs" fill="#2e3c58" stroke="#2e3c58" stroke-width="1.00">Scaled</text>
<text x="1070.2" y="1751.3" font-size="48" textLength="410.3" lengthAdjust="spacingAndGlyphs" fill="#1f4a90" stroke="#1f4a90" stroke-width="1.00">Average (kWh/day)</text>
<text x="1070.2" y="1837.0" font-size="48" textLength="273.3" lengthAdjust="spacingAndGlyphs" fill="#1f4a90" stroke="#1f4a90" stroke-width="1.00">Average(kW)</text>
<text x="1072.0" y="1921.8" font-size="48" textLength="211.3" lengthAdjust="spacingAndGlyphs" fill="#1f4a90" stroke="#1f4a90" stroke-width="1.00">Peak (kW)</text>
<text x="1072.0" y="2007.0" font-size="48" textLength="240.5" lengthAdjust="spacingAndGlyphs" fill="#1f4a90" stroke="#1f4a90" stroke-width="1.00">Load factor</text>
<text x="1598.3" y="1776.4" font-size="49" textLength="95.3" lengthAdjust="spacingAndGlyphs" fill="#1d5078" stroke="#1d5078" stroke-width="1.02">2.84</text>
<text x="1823.0" y="1776.4" font-size="49" textLength="95.4" lengthAdjust="spacingAndGlyphs" fill="#1d5078" stroke="#1d5078" stroke-width="1.02">2.84</text>
<text x="1598.3" y="1843.2" font-size="49" textLength="95.3" lengthAdjust="spacingAndGlyphs" fill="#1d5078" stroke="#1d5078" stroke-width="1.02">0.12</text>
<text x="1823.0" y="1843.2" font-size="49" textLength="95.4" lengthAdjust="spacingAndGlyphs" fill="#1d5078" stroke="#1d5078" stroke-width="1.02">0.12</text>
<text x="1598.3" y="1910.0" font-size="49" textLength="95.3" lengthAdjust="spacingAndGlyphs" fill="#1d5078" stroke="#1d5078" stroke-width="1.02">0.22</text>
<text x="1823.0" y="1910.0" font-size="49" textLength="95.4" lengthAdjust="spacingAndGlyphs" fill="#1d5078" stroke="#1d5078" stroke-width="1.02">0.22</text>
<text x="1598.3" y="1977.0" font-size="49" textLength="95.3" lengthAdjust="spacingAndGlyphs" fill="#1d5078" stroke="#1d5078" stroke-width="1.02">0.53</text>
<text x="1823.0" y="1977.0" font-size="49" textLength="95.4" lengthAdjust="spacingAndGlyphs" fill="#1d5078" stroke="#1d5078" stroke-width="1.02">0.53</text>
<text x="1216.4" y="2142.0" font-size="48" textLength="229.8" lengthAdjust="spacingAndGlyphs" fill="#141414" stroke="#141414" stroke-width="1.00">Load Type:</text>
<circle cx="1537.5" cy="2122.3" r="26.5" fill="url(#radio)" stroke="#c3cedb" stroke-width="4"/>
<circle cx="1537.5" cy="2122.3" r="17.5" fill="#e4ebf3" stroke="#bccad9" stroke-width="3.5"/>
<circle cx="1537.5" cy="2122.3" r="10.5" fill="url(#dot)"/>
<circle cx="1720" cy="2122.3" r="26.5" fill="url(#radio)" stroke="#c3cedb" stroke-width="4"/>
<circle cx="1720" cy="2122.3" r="17.5" fill="url(#radio2)" stroke="#bccad9" stroke-width="3.5"/>
<text x="1588.5" y="2142.0" font-size="48" textLength="61.0" lengthAdjust="spacingAndGlyphs" fill="#3f4f66" stroke="#3f4f66" stroke-width="1.00">AC</text>
<text x="1773.4" y="2142.0" font-size="48" textLength="60.4" lengthAdjust="spacingAndGlyphs" fill="#3f4f66" stroke="#3f4f66" stroke-width="1.00">DC</text>
<path d="M2293.6 1651 H2288 Q2273.5 1651 2273.5 1665.5 V2241.5 Q2273.5 2256 2288 2256 H4066.5 Q4081 2256 4081 2241.5 V1665.5 Q4081 1651 4066.5 1651 H2853" fill="none" stroke="#b0b0b0" stroke-width="6"/>
<rect x="2303.5" y="1617.4" width="54.2" height="54.3" fill="#f1f4f9" stroke="#b7c5d9" stroke-width="4" rx="3"/>
<rect x="2313.0" y="1627.0" width="35.0" height="35.0" fill="url(#chk)" stroke="#c4d0e2" stroke-width="3"/>
<text x="2384.8" y="1664.4" font-size="48" textLength="451.4" lengthAdjust="spacingAndGlyphs" fill="#46566c" stroke="#46566c" stroke-width="1.00">Efficiency (Advanced)</text>
<text x="2332.2" y="1749.4" font-size="48" textLength="426.0" lengthAdjust="spacingAndGlyphs" fill="#111" stroke="#111" stroke-width="1.00">Efficiency multiplier:</text>
<text x="2332.2" y="1858.5" font-size="48" textLength="329.0" lengthAdjust="spacingAndGlyphs" fill="#111" stroke="#111" stroke-width="1.00">Capital cost ($):</text>
<text x="2332.2" y="1967.5" font-size="48" textLength="263.4" lengthAdjust="spacingAndGlyphs" fill="#111" stroke="#111" stroke-width="1.00">Lifetime (yr):</text>
<rect x="2858.6" y="1699.6" width="198.6" height="83.6" fill="#fff" stroke="#dfe2e7" stroke-width="4" rx="9"/>
<text x="2886.4" y="1760.0" font-size="48" textLength="17.0" lengthAdjust="spacingAndGlyphs" fill="#bcc3cd" stroke="#bcc3cd" stroke-width="1.00">1</text>
<rect x="2858.6" y="1808.6" width="198.6" height="83.6" fill="#fff" stroke="#dfe2e7" stroke-width="4" rx="9"/>
<text x="2883.4" y="1868.0" font-size="48" textLength="25.5" lengthAdjust="spacingAndGlyphs" fill="#bcc3cd" stroke="#bcc3cd" stroke-width="1.00">0</text>
<rect x="2858.6" y="1917.6" width="198.6" height="84.3" fill="#fff" stroke="#dfe2e7" stroke-width="4" rx="9"/>
<text x="2883.4" y="1978.0" font-size="48" textLength="52.0" lengthAdjust="spacingAndGlyphs" fill="#bcc3cd" stroke="#bcc3cd" stroke-width="1.00">10</text>
<rect x="2294.6" y="2287.4" width="202.1" height="101.6" fill="#3c3c48" rx="13"/>
<rect x="2297.6" y="2290.4" width="196.1" height="95.6" fill="url(#btn)" rx="10"/>
<text x="2337.0" y="2352.5" font-size="48" textLength="122.2" lengthAdjust="spacingAndGlyphs" font-weight="bold" fill="#fff">Plot...</text>
<rect x="2538.0" y="2287.4" width="282.8" height="101.6" fill="#3c3c48" rx="13"/>
<rect x="2541.0" y="2290.4" width="276.8" height="95.6" fill="url(#btn)" rx="10"/>
<text x="2592.7" y="2352.5" font-size="48" textLength="176.3" lengthAdjust="spacingAndGlyphs" font-weight="bold" fill="#fff">Export...</text>
<rect x="64.0" y="136.0" width="4040.0" height="2270.0" fill="none" stroke="#fdc748" stroke-width="8" rx="24"/>
</svg>
</body></html>
